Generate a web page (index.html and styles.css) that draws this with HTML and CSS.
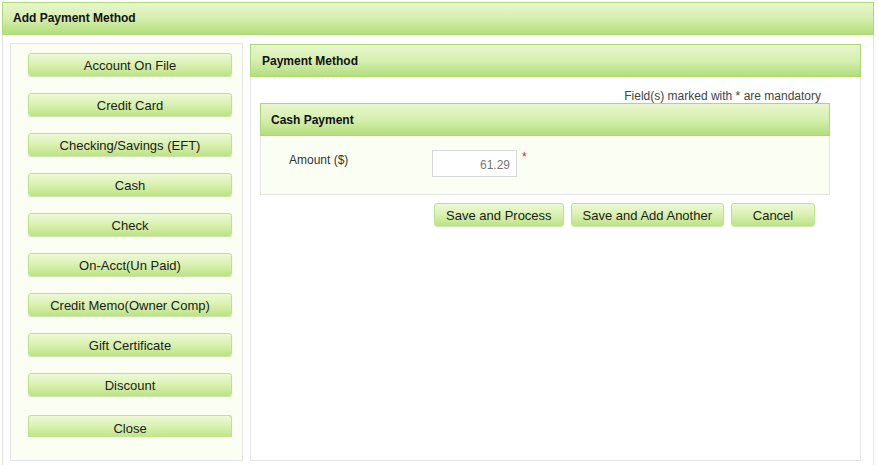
FILE: index.html
```html
<!DOCTYPE html>
<html>
<head>
<meta charset="utf-8">
<title>Add Payment Method</title>
<link rel="stylesheet" href="styles.css">
</head>
<body>
<div class="dialog">
  <div class="dlg-head">Add Payment Method</div>
  <div class="dlg-body">
    <div class="side">
      <button class="btn side-btn">Account On File</button>
      <button class="btn side-btn">Credit Card</button>
      <button class="btn side-btn">Checking/Savings (EFT)</button>
      <button class="btn side-btn">Cash</button>
      <button class="btn side-btn">Check</button>
      <button class="btn side-btn">On-Acct(Un Paid)</button>
      <button class="btn side-btn">Credit Memo(Owner Comp)</button>
      <button class="btn side-btn">Gift Certificate</button>
      <button class="btn side-btn">Discount</button>
      <button class="btn side-btn close-btn">Close</button>
    </div>
    <div class="main">
      <div class="panel-head">Payment Method</div>
      <div class="main-inner">
        <div class="mandatory">Field(s) marked with * are mandatory</div>
        <div class="box">
          <div class="panel-head box-head">Cash Payment</div>
          <div class="box-body">
            <label class="lbl">Amount ($)</label>
            <input class="amount" type="text" value="61.29">
            <span class="req">*</span>
          </div>
        </div>
        <div class="actions">
          <button class="btn act">Save and Process</button>
          <button class="btn act">Save and Add Another</button>
          <button class="btn act cancel">Cancel</button>
        </div>
      </div>
    </div>
  </div>
</div>
</body>
</html>
```
FILE: styles.css
```css
html, body {
  margin: 0;
  padding: 0;
  background: #fff;
  font-family: "Liberation Sans", Arial, sans-serif;
  color: #222;
}
.dialog {
  margin: 2px 0 0 2px;
  width: 872px;
}
.panel-head, .dlg-head {
  box-sizing: border-box;
  height: 33px;
  border: 1px solid #acd976;
  background: linear-gradient(to bottom, #e7f6cb 0%, #d6efaf 50%, #b4dd7b 100%);
  font-weight: bold;
  font-size: 12px;
  color: #111;
  display: flex;
  align-items: center;
}
.dlg-head {
  padding-left: 10px;
  padding-bottom: 1px;
}
.dlg-body {
  display: flex;
  gap: 7px;
  padding: 8px 12px 0 7px;
  border-left: 1px solid #e2e2e2;
  border-right: 1px solid #e2e2e2;
  height: 430px;
}
.side {
  box-sizing: border-box;
  width: 233px;
  height: 418px;
  border: 1px solid #e4e4e4;
  background: #fbfff3;
  padding: 9px 10px 0 17px;
  display: flex;
  flex-direction: column;
  gap: 17px;
}
.btn {
  box-sizing: border-box;
  font-family: "Liberation Sans", Arial, sans-serif;
  font-size: 13px;
  color: #1c1c1c;
  height: 23px;
  border: 1px solid #bde28c;
  border-radius: 3px;
  background: linear-gradient(to bottom, #ecf9d5 0%, #dcf2b6 45%, #bfe487 100%);
  box-shadow: 0 1px 1px rgba(120, 170, 60, 0.35);
  padding: 2px 10px 0;
  cursor: pointer;
}
.side-btn {
  width: 204px;
  flex: none;
}
.close-btn {
  margin-top: 2px;
  height: 22px;
  border-bottom: none;
  border-radius: 3px 3px 0 0;
  box-shadow: none;
  padding-top: 4px;
}
.main {
  box-sizing: border-box;
  width: 612px;
  height: 417px;
  margin-top: 1px;
  border: 1px solid #e4e4e4;
  border-top: none;
  background: #fff;
}
.main .panel-head {
  margin: 0 -1px;
  padding-left: 11px;
}
.main-inner {
  padding: 0 30px 0 9px;
}
.mandatory {
  text-align: right;
  font-size: 12px;
  color: #444;
  padding: 12px 9px 0 0;
  height: 15px;
  line-height: 15px;
}
.box {
  margin-top: -1px;
}
.box .box-head {
  margin: 0;
  padding-left: 10px;
}
.box-body {
  box-sizing: border-box;
  height: 59px;
  border: 1px solid #e4e4e4;
  border-top: none;
  background: #fbfff3;
  display: flex;
  align-items: flex-start;
  padding: 14px 0 0 28px;
}
.lbl {
  font-size: 12px;
  color: #333;
  width: 143px;
  margin-top: 3px;
}
.amount {
  box-sizing: border-box;
  width: 85px;
  height: 27px;
  border: 1px solid #d8d8d8;
  background: #fff;
  text-align: right;
  font-family: "Liberation Sans", Arial, sans-serif;
  font-size: 12px;
  color: #777;
  padding: 2px 6px 0 4px;
  margin: 0;
}
.req {
  color: #e02020;
  font-size: 12px;
  margin-left: 5px;
  margin-top: 0;
}
.actions {
  display: flex;
  justify-content: flex-end;
  gap: 7px;
  padding: 8px 15px 0 0;
}
.act {
  padding: 1px 11px 0;
}
.cancel {
  width: 84px;
}
```
